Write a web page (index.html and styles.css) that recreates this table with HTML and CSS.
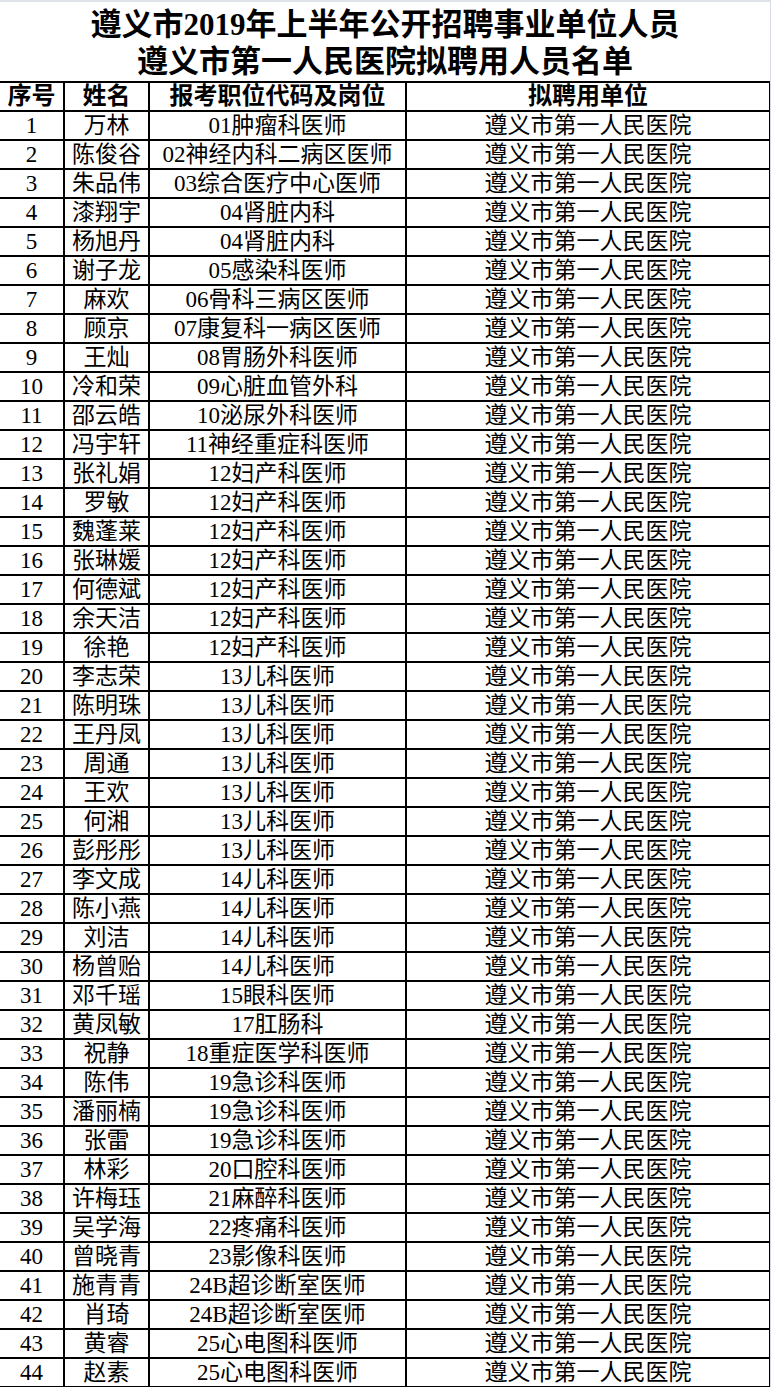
FILE: index.html
```html
<!DOCTYPE html>
<html lang="zh-CN">
<head>
<meta charset="utf-8">
<title>遵义市第一人民医院拟聘用人员名单</title>
<link rel="stylesheet" href="styles.css">
</head>
<body>
<div class="sheet">
  <div class="title">
    <div class="title-line">遵义市2019年上半年公开招聘事业单位人员</div>
    <div class="title-line">遵义市第一人民医院拟聘用人员名单</div>
  </div>
  <table class="roster">
    <colgroup>
      <col class="c-no">
      <col class="c-name">
      <col class="c-post">
      <col class="c-unit">
    </colgroup>
    <thead>
      <tr><th>序号</th><th>姓名</th><th>报考职位代码及岗位</th><th>拟聘用单位</th></tr>
    </thead>
    <tbody>
      <tr><td>1</td><td>万林</td><td>01肿瘤科医师</td><td>遵义市第一人民医院</td></tr>
      <tr><td>2</td><td>陈俊谷</td><td>02神经内科二病区医师</td><td>遵义市第一人民医院</td></tr>
      <tr><td>3</td><td>朱品伟</td><td>03综合医疗中心医师</td><td>遵义市第一人民医院</td></tr>
      <tr><td>4</td><td>漆翔宇</td><td>04肾脏内科</td><td>遵义市第一人民医院</td></tr>
      <tr><td>5</td><td>杨旭丹</td><td>04肾脏内科</td><td>遵义市第一人民医院</td></tr>
      <tr><td>6</td><td>谢子龙</td><td>05感染科医师</td><td>遵义市第一人民医院</td></tr>
      <tr><td>7</td><td>麻欢</td><td>06骨科三病区医师</td><td>遵义市第一人民医院</td></tr>
      <tr><td>8</td><td>顾京</td><td>07康复科一病区医师</td><td>遵义市第一人民医院</td></tr>
      <tr><td>9</td><td>王灿</td><td>08胃肠外科医师</td><td>遵义市第一人民医院</td></tr>
      <tr><td>10</td><td>冷和荣</td><td>09心脏血管外科</td><td>遵义市第一人民医院</td></tr>
      <tr><td>11</td><td>邵云皓</td><td>10泌尿外科医师</td><td>遵义市第一人民医院</td></tr>
      <tr><td>12</td><td>冯宇轩</td><td>11神经重症科医师</td><td>遵义市第一人民医院</td></tr>
      <tr><td>13</td><td>张礼娟</td><td>12妇产科医师</td><td>遵义市第一人民医院</td></tr>
      <tr><td>14</td><td>罗敏</td><td>12妇产科医师</td><td>遵义市第一人民医院</td></tr>
      <tr><td>15</td><td>魏蓬莱</td><td>12妇产科医师</td><td>遵义市第一人民医院</td></tr>
      <tr><td>16</td><td>张琳媛</td><td>12妇产科医师</td><td>遵义市第一人民医院</td></tr>
      <tr><td>17</td><td>何德斌</td><td>12妇产科医师</td><td>遵义市第一人民医院</td></tr>
      <tr><td>18</td><td>余天洁</td><td>12妇产科医师</td><td>遵义市第一人民医院</td></tr>
      <tr><td>19</td><td>徐艳</td><td>12妇产科医师</td><td>遵义市第一人民医院</td></tr>
      <tr><td>20</td><td>李志荣</td><td>13儿科医师</td><td>遵义市第一人民医院</td></tr>
      <tr><td>21</td><td>陈明珠</td><td>13儿科医师</td><td>遵义市第一人民医院</td></tr>
      <tr><td>22</td><td>王丹凤</td><td>13儿科医师</td><td>遵义市第一人民医院</td></tr>
      <tr><td>23</td><td>周通</td><td>13儿科医师</td><td>遵义市第一人民医院</td></tr>
      <tr><td>24</td><td>王欢</td><td>13儿科医师</td><td>遵义市第一人民医院</td></tr>
      <tr><td>25</td><td>何湘</td><td>13儿科医师</td><td>遵义市第一人民医院</td></tr>
      <tr><td>26</td><td>彭彤彤</td><td>13儿科医师</td><td>遵义市第一人民医院</td></tr>
      <tr><td>27</td><td>李文成</td><td>14儿科医师</td><td>遵义市第一人民医院</td></tr>
      <tr><td>28</td><td>陈小燕</td><td>14儿科医师</td><td>遵义市第一人民医院</td></tr>
      <tr><td>29</td><td>刘洁</td><td>14儿科医师</td><td>遵义市第一人民医院</td></tr>
      <tr><td>30</td><td>杨曾贻</td><td>14儿科医师</td><td>遵义市第一人民医院</td></tr>
      <tr><td>31</td><td>邓千瑶</td><td>15眼科医师</td><td>遵义市第一人民医院</td></tr>
      <tr><td>32</td><td>黄凤敏</td><td>17肛肠科</td><td>遵义市第一人民医院</td></tr>
      <tr><td>33</td><td>祝静</td><td>18重症医学科医师</td><td>遵义市第一人民医院</td></tr>
      <tr><td>34</td><td>陈伟</td><td>19急诊科医师</td><td>遵义市第一人民医院</td></tr>
      <tr><td>35</td><td>潘丽楠</td><td>19急诊科医师</td><td>遵义市第一人民医院</td></tr>
      <tr><td>36</td><td>张雷</td><td>19急诊科医师</td><td>遵义市第一人民医院</td></tr>
      <tr><td>37</td><td>林彩</td><td>20口腔科医师</td><td>遵义市第一人民医院</td></tr>
      <tr><td>38</td><td>许梅珏</td><td>21麻醉科医师</td><td>遵义市第一人民医院</td></tr>
      <tr><td>39</td><td>吴学海</td><td>22疼痛科医师</td><td>遵义市第一人民医院</td></tr>
      <tr><td>40</td><td>曾晓青</td><td>23影像科医师</td><td>遵义市第一人民医院</td></tr>
      <tr><td>41</td><td>施青青</td><td>24B超诊断室医师</td><td>遵义市第一人民医院</td></tr>
      <tr><td>42</td><td>肖琦</td><td>24B超诊断室医师</td><td>遵义市第一人民医院</td></tr>
      <tr><td>43</td><td>黄睿</td><td>25心电图科医师</td><td>遵义市第一人民医院</td></tr>
      <tr><td>44</td><td>赵素</td><td>25心电图科医师</td><td>遵义市第一人民医院</td></tr>
    </tbody>
  </table>
</div>
</body>
</html>
```
FILE: styles.css
```css
html, body {
  margin: 0;
  padding: 0;
  background: #ffffff;
}

body {
  font-family: "Liberation Serif", "Noto Sans CJK SC", serif;
  color: #000000;
}

.sheet {
  width: 770px;
  border-right: 1px solid #d6dbe1;
  overflow: hidden;
}

.title {
  box-sizing: border-box;
  height: 81px;
  border-top: 2px solid #dfe3e8;
  padding-top: 4px;
  text-align: center;
  font-size: 31px;
  font-weight: bold;
  line-height: 37px;
  white-space: nowrap;
}

.roster {
  border-collapse: collapse;
  table-layout: fixed;
  width: 770px;
}

.c-no { width: 64px; }
.c-name { width: 85px; }
.c-post { width: 257px; }
.c-unit { width: 364px; }

.roster tr {
  height: 29px;
}

.roster th,
.roster td {
  border: 2px solid #000000;
  padding: 0;
  text-align: center;
  vertical-align: middle;
  white-space: nowrap;
  line-height: 27px;
}

.roster th {
  font-size: 24px;
  font-weight: bold;
}

.roster td {
  font-size: 23px;
  font-weight: normal;
}

.roster th:first-child,
.roster td:first-child {
  border-left: none;
}
```
